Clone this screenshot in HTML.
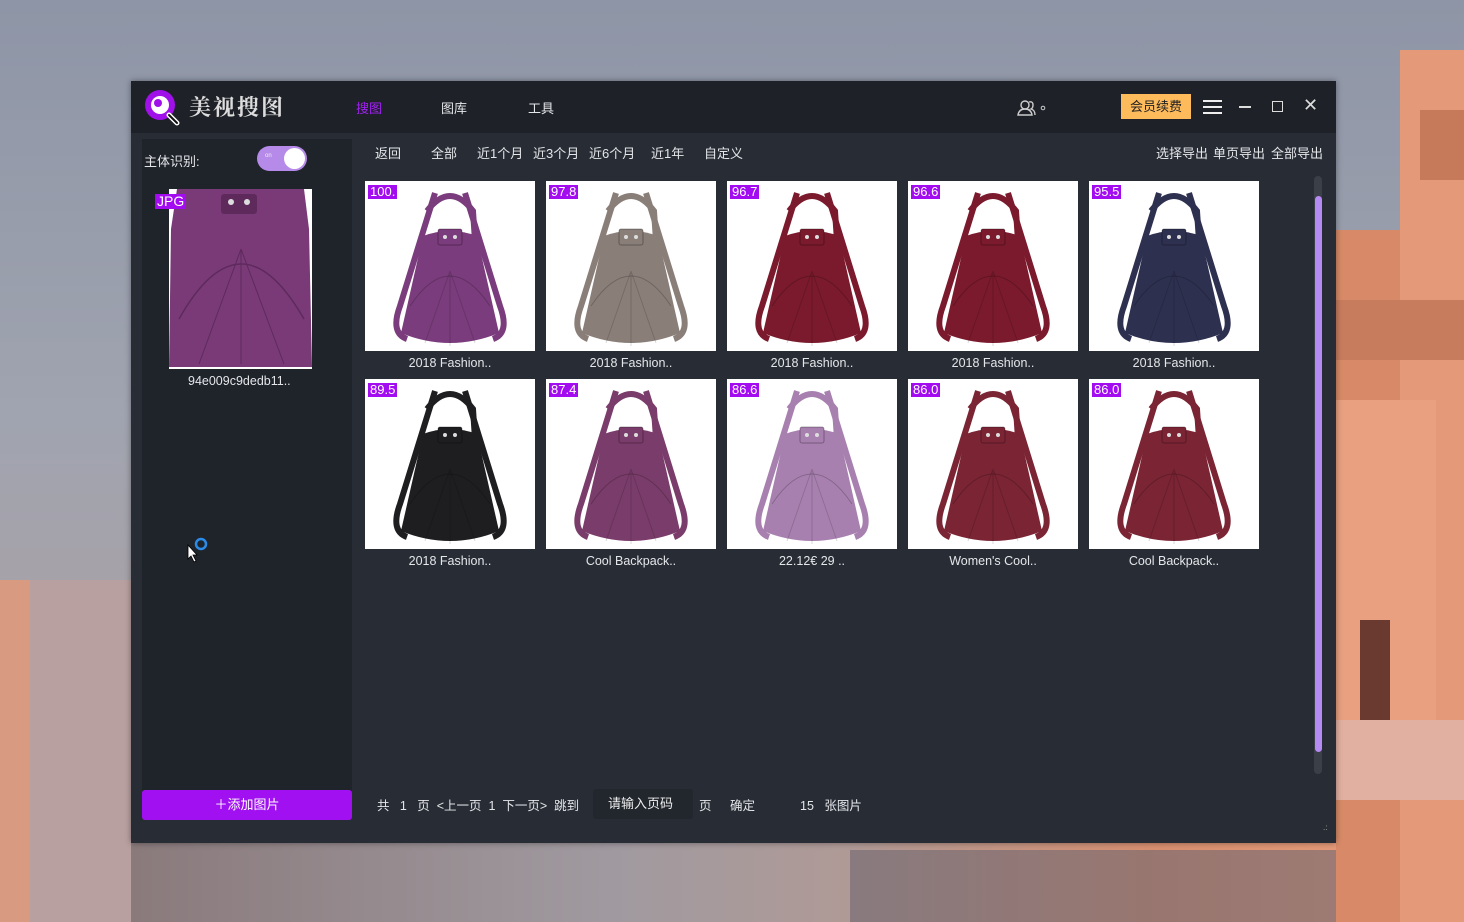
<!DOCTYPE html>
<html><head><meta charset="utf-8"><style>
*{margin:0;padding:0;box-sizing:border-box}
body{width:1464px;height:922px;overflow:hidden;position:relative;font-family:"Liberation Sans","Noto Sans CJK SC",sans-serif;background:linear-gradient(180deg,#8e95a6 0%,#a0a4b0 45%,#a8a1a6 70%,#9a8a8e 100%)}
.abs{position:absolute}
.win{left:131px;top:81px;width:1205px;height:762px;background:#282d35;box-shadow:0 0 6px rgba(0,0,0,.4)}
.title{left:0;top:0;width:1205px;height:52px;background:#1e2228}
.t{position:absolute;color:#e4e6ea;font-size:13px;white-space:nowrap}
.card{position:absolute;width:170px;height:170px;background:#fff}
.badge{position:absolute;left:3px;top:4px;background:#a30cf0;color:#fff;font-size:13px;line-height:14px;padding:0 2px;font-family:"Liberation Sans",sans-serif}
.cap{position:absolute;width:170px;text-align:center;color:#e4e6ea;font-size:12.5px}
</style></head><body>
<div class="abs" style="left:1336px;top:230px;width:128px;height:692px;background:#d88a68"></div>
<div class="abs" style="left:1400px;top:50px;width:64px;height:872px;background:#e49a78"></div>
<div class="abs" style="left:1420px;top:110px;width:44px;height:70px;background:#c77a5a"></div>
<div class="abs" style="left:1336px;top:300px;width:128px;height:60px;background:#c87c5e"></div>
<div class="abs" style="left:1336px;top:400px;width:100px;height:320px;background:#e8a080"></div>
<div class="abs" style="left:1360px;top:620px;width:30px;height:150px;background:#6a3a30"></div>
<div class="abs" style="left:1336px;top:720px;width:128px;height:80px;background:#e2b0a0"></div>
<div class="abs" style="left:0;top:580px;width:131px;height:342px;background:#b8a0a0"></div>
<div class="abs" style="left:0;top:580px;width:30px;height:342px;background:#d89a80"></div>
<div class="abs" style="left:131px;top:843px;width:1205px;height:79px;background:linear-gradient(90deg,#8a7a7c 0%,#a09aa0 40%,#b09a96 60%,#d99070 85%,#e49a78 100%)"></div>
<div class="abs" style="left:850px;top:850px;width:486px;height:72px;background:#6e6670;opacity:.6"></div>

<div class="abs win">
 <div class="abs title"></div>
 <svg class="abs" style="left:11px;top:6px" width="42" height="42" viewBox="0 0 42 42"><circle cx="18" cy="18" r="15" fill="#a010e8"/><circle cx="18" cy="18" r="9" fill="#fff"/><circle cx="16" cy="16" r="4" fill="#a010e8"/><line x1="27" y1="28" x2="35" y2="36" stroke="#fff" stroke-width="5" stroke-linecap="round"/><line x1="27" y1="28" x2="35" y2="36" stroke="#111" stroke-width="2" stroke-linecap="round"/></svg>
 <div class="t" style="left:58px;top:10px;font-size:22px;font-weight:bold;font-family:'Noto Serif CJK SC',serif;color:#ddd;letter-spacing:2px">美视搜图</div>
 <div class="t" style="left:225px;top:17px;color:#a020f0">搜图</div>
 <div class="t" style="left:310px;top:17px">图库</div>
 <div class="t" style="left:397px;top:17px">工具</div>
 <svg class="abs" style="left:885px;top:18px" width="30" height="18" viewBox="0 0 30 18"><circle cx="9" cy="6" r="4" fill="none" stroke="#ccc" stroke-width="1.4"/><path d="M2 16 Q3 10 9 10 Q15 10 16 16 Z" fill="none" stroke="#ccc" stroke-width="1.4"/><path d="M13 3 Q17 2 17 6 Q17 9 15 10 Q19 11 19 16" fill="none" stroke="#ccc" stroke-width="1.4"/><circle cx="27" cy="9" r="1.8" fill="none" stroke="#ccc"/></svg>
 <div class="abs" style="left:990px;top:13px;width:70px;height:25px;background:#fdbb5c;color:#222;font-size:13px;text-align:center;line-height:25px">会员续费</div>
 <div class="abs" style="left:1072px;top:19px;width:19px;height:2px;background:#eee"></div>
 <div class="abs" style="left:1072px;top:25px;width:19px;height:2px;background:#eee"></div>
 <div class="abs" style="left:1072px;top:31px;width:19px;height:2px;background:#eee"></div>
 <div class="abs" style="left:1108px;top:25px;width:12px;height:1.5px;background:#ddd"></div>
 <div class="abs" style="left:1141px;top:20px;width:11px;height:11px;border:1.5px solid #ddd"></div>
 <div class="t" style="left:1172px;top:14px;font-size:18px;color:#ddd">✕</div>

 <div class="abs" style="left:11px;top:58px;width:210px;height:652px;background:#1f232a"></div>
 <div class="t" style="left:13px;top:70px">主体识别:</div>
 <div class="abs" style="left:126px;top:65px;width:50px;height:25px;border-radius:13px;background:#b68ae8"></div>
 <div class="abs" style="left:153px;top:67px;width:21px;height:21px;border-radius:50%;background:#fff"></div>
 <div class="t" style="left:134px;top:72px;font-size:6px;color:#eee">on</div>
 <div class="abs" style="left:38px;top:108px;width:143px;height:180px;background:#fff;overflow:hidden">
  <svg width="143" height="180" viewBox="0 0 143 180"><path d="M8 0 L135 0 L140 40 L143 178 L0 178 L2 40 Z" fill="#7a3a78"/><path d="M10 130 Q72 20 135 130" fill="none" stroke="#5e2a5c" stroke-width="1.5"/><path d="M72 60 L72 175 M72 60 L30 175 M72 60 L115 175" stroke="#5e2a5c" stroke-width="1"/><rect x="52" y="5" width="36" height="20" rx="3" fill="#5e2a5c"/><circle cx="62" cy="13" r="3" fill="#ddd"/><circle cx="78" cy="13" r="3" fill="#ddd"/></svg>
 </div>
 <div class="abs" style="left:24px;top:113px;background:#a30cf0;color:#fff;font-size:14px;line-height:15px;padding:0 2px">JPG</div>
 <div class="t" style="left:57px;top:293px;font-size:12.5px">94e009c9dedb11..</div>
 <svg class="abs" style="left:55px;top:455px" width="26" height="28" viewBox="0 0 26 28"><circle cx="15" cy="8" r="5" fill="none" stroke="#2a8ce8" stroke-width="2.5"/><path d="M2 9 L2 23 L5 20 L8 26 L10 25 L7 19 L11 19 Z" fill="#fff" stroke="#000" stroke-width="0.8"/></svg>
 <div class="abs" style="left:11px;top:709px;width:210px;height:30px;background:#a010f0;border-radius:3px;color:#fff;font-size:13px;text-align:center;line-height:30px">＋添加图片</div>

 <div class="t" style="left:244px;top:62px">返回</div>
 <div class="t" style="left:300px;top:62px">全部</div>
 <div class="t" style="left:346px;top:62px">近1个月</div>
 <div class="t" style="left:402px;top:62px">近3个月</div>
 <div class="t" style="left:458px;top:62px">近6个月</div>
 <div class="t" style="left:520px;top:62px">近1年</div>
 <div class="t" style="left:573px;top:62px">自定义</div>
 <div class="t" style="left:1025px;top:62px">选择导出</div>
 <div class="t" style="left:1082px;top:62px">单页导出</div>
 <div class="t" style="left:1140px;top:62px">全部导出</div>

 <div class="abs" style="left:1183px;top:95px;width:8px;height:598px;border-radius:4px;background:#3a3f48"></div>
 <div class="abs" style="left:1184px;top:115px;width:7px;height:556px;border-radius:4px;background:#b58af2"></div>

 <div class="t" style="left:246px;top:714px;font-size:12.5px">共&nbsp;&nbsp; 1&nbsp;&nbsp; 页&nbsp; &lt;上一页&nbsp; 1&nbsp; 下一页&gt;&nbsp; 跳到</div>
 <div class="abs" style="left:462px;top:708px;width:100px;height:30px;background:#22262d;border-radius:3px;color:#eee;font-size:13px;line-height:30px;padding-left:15px">请输入页码</div>
 <div class="t" style="left:568px;top:714px;font-size:12.5px">页</div>
 <div class="t" style="left:599px;top:714px;font-size:12.5px">确定</div>
 <div class="t" style="left:669px;top:714px;font-size:12.5px">15&nbsp;&nbsp; 张图片</div>
 <div class="t" style="left:1192px;top:742px;font-size:8px;color:#aaa">.:</div>
</div>

<svg width="0" height="0" style="position:absolute"><defs>
<symbol id="bp" viewBox="0 0 170 170"><path d="M62 30 Q85 0 108 30 L110 60" fill="none" stroke="currentColor" stroke-width="6"/><path d="M70 12 L35 125 Q25 152 42 158" fill="none" stroke="currentColor" stroke-width="6"/><path d="M100 12 L135 125 Q145 152 128 158" fill="none" stroke="currentColor" stroke-width="6"/><path d="M58 55 Q85 45 112 55 L134 152 Q85 172 36 152 Z" fill="currentColor"/><rect x="73" y="48" width="24" height="16" rx="2" fill="currentColor" stroke="#000" stroke-opacity=".3"/><circle cx="80" cy="56" r="2" fill="#ddd"/><circle cx="90" cy="56" r="2" fill="#ddd"/><path d="M45 125 Q85 65 125 125" fill="none" stroke="#000" stroke-opacity=".2"/><path d="M85 90 L85 165 M85 90 L60 162 M85 90 L110 162" stroke="#000" stroke-opacity=".15"/></symbol>
</defs></svg>
<div class="card" style="left:365px;top:181px;color:#7a3c7c"><svg width="170" height="170"><use href="#bp"/></svg><span class="badge">100.</span></div>
<div class="card" style="left:546px;top:181px;color:#8a7e78"><svg width="170" height="170"><use href="#bp"/></svg><span class="badge">97.8</span></div>
<div class="card" style="left:727px;top:181px;color:#7a1a2c"><svg width="170" height="170"><use href="#bp"/></svg><span class="badge">96.7</span></div>
<div class="card" style="left:908px;top:181px;color:#7a1a2c"><svg width="170" height="170"><use href="#bp"/></svg><span class="badge">96.6</span></div>
<div class="card" style="left:1089px;top:181px;color:#2e3050"><svg width="170" height="170"><use href="#bp"/></svg><span class="badge">95.5</span></div>
<div class="card" style="left:365px;top:379px;color:#1e1e20"><svg width="170" height="170"><use href="#bp"/></svg><span class="badge">89.5</span></div>
<div class="card" style="left:546px;top:379px;color:#7a3c6a"><svg width="170" height="170"><use href="#bp"/></svg><span class="badge">87.4</span></div>
<div class="card" style="left:727px;top:379px;color:#a880b0"><svg width="170" height="170"><use href="#bp"/></svg><span class="badge">86.6</span></div>
<div class="card" style="left:908px;top:379px;color:#7a2434"><svg width="170" height="170"><use href="#bp"/></svg><span class="badge">86.0</span></div>
<div class="card" style="left:1089px;top:379px;color:#7a2434"><svg width="170" height="170"><use href="#bp"/></svg><span class="badge">86.0</span></div>
<div class="cap" style="left:365px;top:356px">2018 Fashion..</div>
<div class="cap" style="left:546px;top:356px">2018 Fashion..</div>
<div class="cap" style="left:727px;top:356px">2018 Fashion..</div>
<div class="cap" style="left:908px;top:356px">2018 Fashion..</div>
<div class="cap" style="left:1089px;top:356px">2018 Fashion..</div>
<div class="cap" style="left:365px;top:554px">2018 Fashion..</div>
<div class="cap" style="left:546px;top:554px">Cool Backpack..</div>
<div class="cap" style="left:727px;top:554px">22.12€ 29 ..</div>
<div class="cap" style="left:908px;top:554px">Women's Cool..</div>
<div class="cap" style="left:1089px;top:554px">Cool Backpack..</div>
</body></html>
